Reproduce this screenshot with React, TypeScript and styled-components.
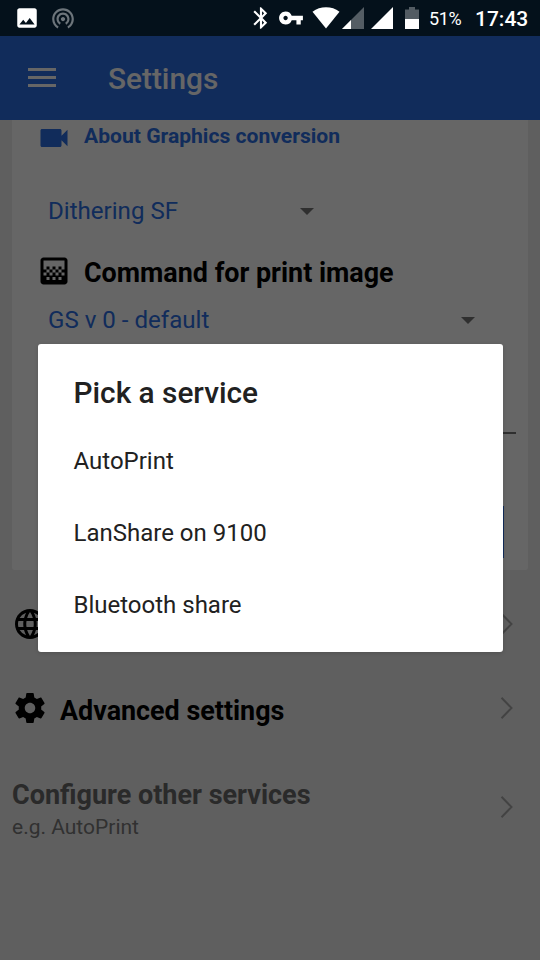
import React from "react";
import styled, { createGlobalStyle } from "styled-components";
import {
  MdImage,
  MdWifiTethering,
  MdBluetooth,
  MdVpnKey,
  MdVideocam,
  MdGradient,
  MdLanguage,
} from "react-icons/md";

const GlobalStyle = createGlobalStyle`
  * { box-sizing: border-box; }
  body { margin: 0; background: #5f5f5f; font-family: Roboto, sans-serif; }
  svg { display: block; flex: none; }
`;

const Screen = styled.div`
  position: relative;
  width: 540px;
  height: 960px;
  overflow: hidden;
  display: flex;
  flex-direction: column;
  background: #eeeeee;
`;

const StatusBar = styled.header`
  position: relative;
  z-index: 2;
  height: 36px;
  flex: none;
  display: flex;
  align-items: center;
  justify-content: space-between;
  padding: 0 12px 0 14px;
  background: #04111b;
  color: #fff;
`;

const StatusGroup = styled.div<{ $gap: number }>`
  display: flex;
  align-items: center;
  gap: ${(p) => p.$gap}px;
`;

const StatusIcon = styled.span<{ $dim?: boolean }>`
  display: flex;
  color: ${(p) => (p.$dim ? "#6d757b" : "#fff")};
`;

const Percent = styled.span`
  width: 34px;
  margin: 1px 0 0 10px;
  font-size: 18px;
  line-height: 36px;
  letter-spacing: -0.4px;
  white-space: nowrap;
`;

const Clock = styled.span`
  width: 53px;
  margin: 1px 0 0 12px;
  font-size: 21px;
  font-weight: 500;
  line-height: 36px;
  white-space: nowrap;
`;

const AppBar = styled.div`
  height: 84px;
  flex: none;
  display: flex;
  align-items: center;
  gap: 52px;
  padding-left: 28px;
  background: #2b6ee4;
  color: #fff;
`;

const MenuButton = styled.button`
  width: 28px;
  height: 19px;
  margin-top: -1px;
  padding: 0;
  border: 0;
  background: none;
  display: flex;
  flex-direction: column;
  justify-content: space-between;
`;

const MenuLine = styled.span`
  height: 3px;
  background: #fff;
`;

const AppTitle = styled.h1`
  margin: 1px 0 0;
  font-size: 29.8px;
  font-weight: 500;
  line-height: 36px;
`;

const Card = styled.section`
  height: 450px;
  flex: none;
  margin: 0 12px;
  padding: 0 12px 0 24px;
  background: #fff;
  border-radius: 0 0 3px 3px;
`;

const CardHeading = styled.div<{ $link?: boolean }>`
  display: flex;
  align-items: center;
  gap: 12px;
  height: 36px;
  margin-top: ${(p) => (p.$link ? 0 : 24)}px;
  color: ${(p) => (p.$link ? "#2b6ee4" : "#000")};
`;

const HeadingText = styled.span<{ $link?: boolean }>`
  font-size: ${(p) => (p.$link ? 21.1 : 26.9)}px;
  font-weight: 700;
  line-height: 32px;
  margin-top: ${(p) => (p.$link ? -5 : 3)}px;
  white-space: nowrap;
`;

const Select = styled.div<{ $width: number; $top: number }>`
  display: flex;
  align-items: center;
  justify-content: space-between;
  width: ${(p) => p.$width}px;
  height: 36px;
  margin: ${(p) => p.$top}px 0 0 12px;
  color: #2b6ee4;
  font-size: 24.1px;
`;

const Caret = styled.span`
  border: 7px solid transparent;
  border-top-color: #757575;
  border-bottom: 0;
`;

const InputLine = styled.div`
  height: 2px;
  margin: 94px 0 0 12px;
  background: #757575;
`;

const OutlineButton = styled.div`
  width: 456px;
  height: 52px;
  margin-top: 72px;
  margin-left: 12px;
  border: 2px solid #2b6ee4;
`;

const Row = styled.div<{ $height: number; $top?: number }>`
  display: flex;
  align-items: center;
  height: ${(p) => p.$height}px;
  flex: none;
  margin-top: ${(p) => p.$top ?? 0}px;
  padding: 0 27px 0 12px;
`;

const RowTitle = styled.span`
  flex: 1;
  margin: 6px 0 0 12px;
  font-size: 26.9px;
  font-weight: 700;
`;

const ServiceLabel = styled.div`
  flex: 1;
  display: flex;
  flex-direction: column;
  padding-top: 8px;
`;

const ServiceTitle = styled.span`
  font-size: 27px;
  line-height: 33px;
  font-weight: 700;
  color: #696969;
`;

const ServiceHint = styled.span`
  font-size: 21px;
  line-height: 31px;
  color: #7a7a7a;
`;

const Scrim = styled.div`
  position: absolute;
  inset: 0;
  z-index: 1;
  display: flex;
  align-items: flex-start;
  padding: 344px 0 0 37.5px;
  background: rgba(0, 0, 0, 0.6);
`;

const Dialog = styled.div`
  width: 465px;
  height: 307.5px;
  padding-top: 27px;
  background: #fff;
  border-radius: 3px;
  box-shadow: 0 1px 4px rgba(0, 0, 0, 0.15);
  color: #212121;
`;

const DialogTitle = styled.h2`
  margin: 0 0 17px;
  padding-left: 36px;
  font-size: 29.8px;
  font-weight: 500;
  line-height: 44px;
`;

const DialogItem = styled.div`
  height: 72px;
  padding-left: 36px;
  font-size: 24px;
  line-height: 58px;
`;

const Chevron = () => (
  <svg width="13" height="24" viewBox="0 0 13 24" fill="none" stroke="#a8a8a8" strokeWidth="2">
    <path d="M1.5 1.8L11.500 12L1.5 22.2" />
  </svg>
);

const Gear = () => (
  <svg width="36" height="36" viewBox="0 0 24 24" fill="currentColor">
    <path d="M19.430 12.980c.04-.32.07-.64.07-.98s-.03-.66-.07-.98l2.110-1.650c.19-.15.24-.42.12-.64l-2-3.460c-.12-.22-.39-.3-.61-.22l-2.490 1c-.52-.4-1.080-.73-1.690-.98l-.38-2.650C14.460 2.180 14.250 2 14 2h-4c-.25 0-.46.18-.49.42l-.38 2.650c-.61.25-1.170.59-1.690.98l-2.490-1c-.23-.09-.49 0-.61.22l-2 3.460c-.13.22-.07.49.12.64l2.110 1.650c-.04.32-.07.65-.07.98s.03.66.07.98l-2.110 1.650c-.19.15-.24.42-.12.64l2 3.460c.12.22.39.3.61.22l2.490-1c.52.4 1.080.73 1.690.98l.38 2.650c.03.24.24.42.49.42h4c.25 0 .46-.18.49-.42l.38-2.650c.61-.25 1.170-.59 1.690-.98l2.490 1c.23.09.49 0 .61-.22l2-3.460c.12-.22.07-.49-.12-.64l-2.110-1.650zM12 15.500c-1.930 0-3.500-1.570-3.500-3.500s1.570-3.500 3.500-3.500 3.500 1.570 3.500 3.500-1.570 3.500-3.500 3.500z" />
  </svg>
);

const Wifi = () => (
  <svg width="28" height="22" viewBox="0 0 28 22" fill="currentColor">
    <path d="M14 21.5L.5 4.8C4.5 1.7 9 .3 14 .3s9.500 1.400 13.500 4.500z" />
  </svg>
);

const Signal = ({ level }: { level: number }) => (
  <svg width="22" height="22" viewBox="0 0 22 22">
    <path d="M0 22L22 0V22z" fill="#fff" fillOpacity={level < 1 ? 0.32 : 1} />
    {level < 1 && <path d="M0 22L9 13V22z" fill="#fff" />}
  </svg>
);

const Battery = () => (
  <svg width="14" height="22" viewBox="0 0 14 22">
    <path d="M0 2.500H4V0H10V2.500H14V12H0z" fill="#535c63" />
    <path d="M0 12H14V22H0z" fill="#fff" />
  </svg>
);

const services = ["AutoPrint", "LanShare on 9100", "Bluetooth share"];

export default function App() {
  return (
    <>
      <GlobalStyle />
      <Screen>
        <StatusBar>
          <StatusGroup $gap={10}>
            <StatusIcon><MdImage size={26} /></StatusIcon>
            <StatusIcon $dim><MdWifiTethering size={26} /></StatusIcon>
          </StatusGroup>
          <StatusGroup $gap={0}>
            <StatusGroup $gap={8}>
              <StatusGroup $gap={4}>
                <StatusIcon><MdBluetooth size={26} /></StatusIcon>
                <StatusIcon><MdVpnKey size={26} /></StatusIcon>
              </StatusGroup>
              <StatusGroup $gap={12}>
                <StatusGroup $gap={7}>
                  <StatusGroup $gap={2}>
                    <Wifi />
                    <Signal level={0.4} />
                  </StatusGroup>
                  <Signal level={1} />
                </StatusGroup>
                <Battery />
              </StatusGroup>
            </StatusGroup>
            <Percent>51%</Percent>
            <Clock>17:43</Clock>
          </StatusGroup>
        </StatusBar>

        <AppBar>
          <MenuButton aria-label="Menu">
            <MenuLine />
            <MenuLine />
            <MenuLine />
          </MenuButton>
          <AppTitle>Settings</AppTitle>
        </AppBar>

        <Card>
          <CardHeading $link>
            <MdVideocam size={36} />
            <HeadingText $link>About Graphics conversion</HeadingText>
          </CardHeading>
          <Select $width={266} $top={37}>
            Dithering SF
            <Caret />
          </Select>
          <CardHeading>
            <MdGradient size={36} />
            <HeadingText>Command for print image</HeadingText>
          </CardHeading>
          <Select $width={427} $top={13}>
            GS v 0 - default
            <Caret />
          </Select>
          <InputLine />
          <OutlineButton />
        </Card>

        <Row $height={84} $top={12}>
          <MdLanguage size={36} />
          <RowTitle />
          <Chevron />
        </Row>
        <Row $height={84}>
          <Gear />
          <RowTitle>Advanced settings</RowTitle>
          <Chevron />
        </Row>
        <Row $height={84} $top={15}>
          <ServiceLabel>
            <ServiceTitle>Configure other services</ServiceTitle>
            <ServiceHint>e.g. AutoPrint</ServiceHint>
          </ServiceLabel>
          <Chevron />
        </Row>

        <Scrim>
          <Dialog role="dialog">
            <DialogTitle>Pick a service</DialogTitle>
            {services.map((name) => (
              <DialogItem key={name}>{name}</DialogItem>
            ))}
          </Dialog>
        </Scrim>
      </Screen>
    </>
  );
}
